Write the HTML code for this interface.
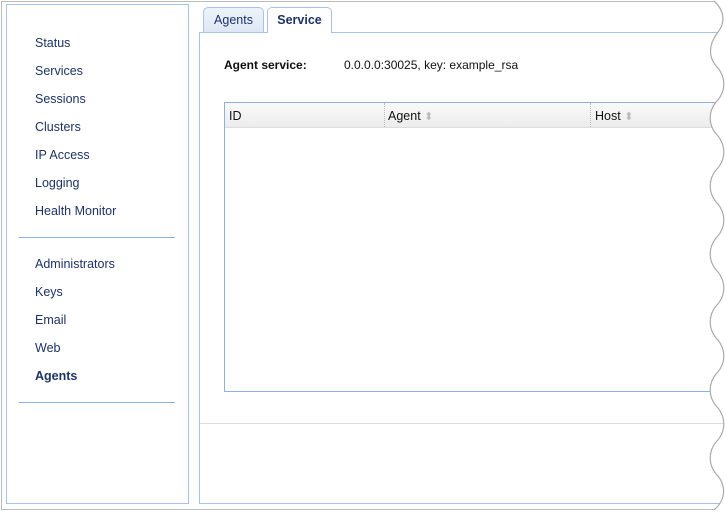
<!DOCTYPE html>
<html><head><style>
body{margin:0;width:726px;height:513px;background:#fff;font-family:"Liberation Sans",Arial,sans-serif;position:relative;overflow:hidden}
.a{position:absolute}
.nav{left:35px;font-size:12.5px;color:#1c3366}
.tab{top:7px;height:25px;border:1px solid #a9c3e6;border-bottom:none;border-radius:5px 5px 0 0;background:linear-gradient(#eef3fa,#dde7f4);font-size:12.5px;color:#1c3366;text-align:center;line-height:25px;box-sizing:border-box}
.si{color:#bbb;font-size:11px;letter-spacing:-1px}
</style></head><body>
<div class="a" style="left:1px;top:1px;width:740px;height:509px;border:1px solid #bbb;box-sizing:border-box"></div>
<div class="a" style="left:6px;top:4px;width:183px;height:500px;border:1px solid #a9c3e6;box-sizing:border-box"></div>
<div class="a nav" style="top:36px">Status</div>
<div class="a nav" style="top:64px">Services</div>
<div class="a nav" style="top:92px">Sessions</div>
<div class="a nav" style="top:120px">Clusters</div>
<div class="a nav" style="top:148px">IP Access</div>
<div class="a nav" style="top:176px">Logging</div>
<div class="a nav" style="top:204px">Health Monitor</div>
<div class="a" style="left:19px;top:237px;width:156px;height:1px;background:#8fb0e0"></div>
<div class="a nav" style="top:257px">Administrators</div>
<div class="a nav" style="top:285px">Keys</div>
<div class="a nav" style="top:313px">Email</div>
<div class="a nav" style="top:341px">Web</div>
<div class="a nav" style="top:369px;font-weight:bold">Agents</div>
<div class="a" style="left:19px;top:402px;width:156px;height:1px;background:#8fb0e0"></div>

<div class="a" style="left:199px;top:32px;width:560px;height:472px;border:1px solid #a9c3e6;box-sizing:border-box"></div>
<div class="a tab" style="left:203px;width:61px">Agents</div>
<div class="a tab" style="left:267px;width:65px;height:26px;background:#fff;font-weight:bold;z-index:2">Service</div>
<div class="a" style="left:224px;top:58px;font-size:12px;font-weight:bold;color:#111">Agent service:</div>
<div class="a" style="left:344px;top:58px;font-size:12px;color:#111">0.0.0.0:30025, key: example_rsa</div>
<div class="a" style="left:224px;top:102px;width:520px;height:290px;border:1px solid #8fb0e0;box-sizing:border-box"></div>
<div class="a" style="left:225px;top:103px;width:520px;height:24px;background:linear-gradient(#fafafa,#ececec);border-bottom:1px solid #ddd;font-size:12.5px;color:#111;line-height:24px">
 <span class="a" style="left:4px;top:1px">ID</span>
 <span class="a" style="left:159px;top:0;height:24px;border-left:1px dotted #bbb"></span>
 <span class="a" style="left:163px;top:1px">Agent <span class="si">&#x2B0D;</span></span>
 <span class="a" style="left:365px;top:0;height:24px;border-left:1px dotted #bbb"></span>
 <span class="a" style="left:370px;top:1px">Host <span class="si">&#x2B0D;</span></span>
</div>
<div class="a" style="left:200px;top:423px;width:540px;height:1px;background:#ddd"></div>
<svg class="a" style="left:0;top:0" width="726" height="513">
<path d="M714,1 C724,10 726,22 718,32 C708,45 708,58 718,68 C726,78 726,92 716,102 C708,112 708,126 718,136 C726,146 726,160 716,170 C708,180 708,194 718,204 C726,214 726,228 716,238 C708,248 708,262 718,272 C726,282 726,296 716,306 C708,316 708,330 718,340 C726,350 726,364 716,374 C708,384 708,398 718,408 C726,418 726,432 716,442 C708,452 708,466 718,476 C726,486 726,500 714,510 L740,510 L740,0 Z" fill="#fff"/>
<path d="M714,1 C724,10 726,22 718,32 C708,45 708,58 718,68 C726,78 726,92 716,102 C708,112 708,126 718,136 C726,146 726,160 716,170 C708,180 708,194 718,204 C726,214 726,228 716,238 C708,248 708,262 718,272 C726,282 726,296 716,306 C708,316 708,330 718,340 C726,350 726,364 716,374 C708,384 708,398 718,408 C726,418 726,432 716,442 C708,452 708,466 718,476 C726,486 726,500 714,510" fill="none" stroke="#aaa" stroke-width="1.2"/>
</svg>
</body></html>
